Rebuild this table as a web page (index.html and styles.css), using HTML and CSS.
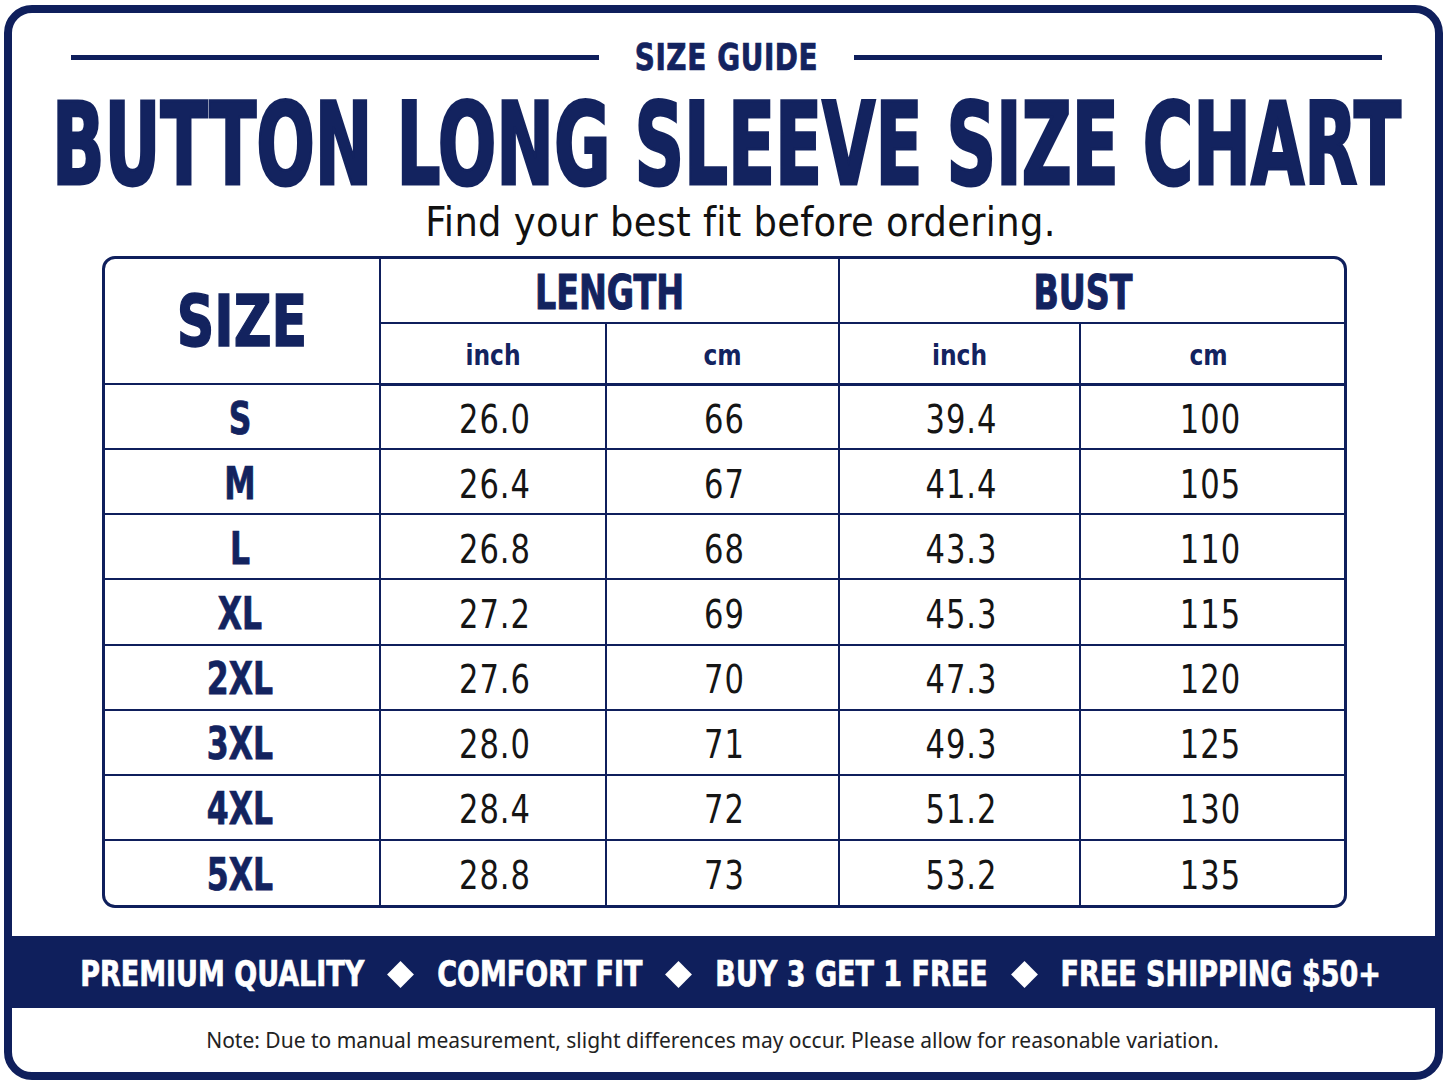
FILE: index.html
```html
<!DOCTYPE html>
<html lang="en">
<head>
<meta charset="utf-8">
<title>Button Long Sleeve Size Chart</title>
<link rel="stylesheet" href="styles.css">
</head>
<body>
<div class="frame">
  <div class="guide-row">
    <span class="rule"></span>
    <span class="guide sq">SIZE GUIDE</span>
    <span class="rule"></span>
  </div>
  <h1 class="title"><span class="sq">BUTTON LONG SLEEVE SIZE CHART</span></h1>
  <p class="subtitle"><span class="sq">Find your best fit before ordering.</span></p>
  <div class="chart">
    <table>
      <colgroup>
        <col class="c-size"><col class="c-li"><col class="c-lc"><col class="c-bi"><col class="c-bc">
      </colgroup>
      <thead>
        <tr class="group">
          <th rowspan="2" class="size-head"><span class="sq">SIZE</span></th>
          <th colspan="2"><span class="sq">LENGTH</span></th>
          <th colspan="2" class="bust"><span class="sq">BUST</span></th>
        </tr>
        <tr class="units">
          <th><span class="sq">inch</span></th><th><span class="sq">cm</span></th>
          <th><span class="sq">inch</span></th><th class="last"><span class="sq">cm</span></th>
        </tr>
      </thead>
      <tbody>
        <tr><th><span class="sq">S</span></th><td><span class="sq">26.0</span></td><td><span class="sq">66</span></td><td><span class="sq">39.4</span></td><td class="last"><span class="sq">100</span></td></tr>
        <tr><th><span class="sq">M</span></th><td><span class="sq">26.4</span></td><td><span class="sq">67</span></td><td><span class="sq">41.4</span></td><td class="last"><span class="sq">105</span></td></tr>
        <tr><th><span class="sq">L</span></th><td><span class="sq">26.8</span></td><td><span class="sq">68</span></td><td><span class="sq">43.3</span></td><td class="last"><span class="sq">110</span></td></tr>
        <tr><th><span class="sq">XL</span></th><td><span class="sq">27.2</span></td><td><span class="sq">69</span></td><td><span class="sq">45.3</span></td><td class="last"><span class="sq">115</span></td></tr>
        <tr><th><span class="sq">2XL</span></th><td><span class="sq">27.6</span></td><td><span class="sq">70</span></td><td><span class="sq">47.3</span></td><td class="last"><span class="sq">120</span></td></tr>
        <tr><th><span class="sq">3XL</span></th><td><span class="sq">28.0</span></td><td><span class="sq">71</span></td><td><span class="sq">49.3</span></td><td class="last"><span class="sq">125</span></td></tr>
        <tr><th><span class="sq">4XL</span></th><td><span class="sq">28.4</span></td><td><span class="sq">72</span></td><td><span class="sq">51.2</span></td><td class="last"><span class="sq">130</span></td></tr>
        <tr><th><span class="sq">5XL</span></th><td><span class="sq">28.8</span></td><td><span class="sq">73</span></td><td><span class="sq">53.2</span></td><td class="last"><span class="sq">135</span></td></tr>
      </tbody>
    </table>
  </div>
  <div class="band">
    <span class="deal sq">PREMIUM QUALITY</span>
    <span class="diamond"></span>
    <span class="deal sq">COMFORT FIT</span>
    <span class="diamond"></span>
    <span class="deal sq">BUY 3 GET 1 FREE</span>
    <span class="diamond"></span>
    <span class="deal sq">FREE SHIPPING $50+</span>
  </div>
  <div class="note">Note: Due to manual measurement, slight differences may occur. Please allow for reasonable variation.</div>
</div>
</body>
</html>
```

FILE: styles.css
```css
* { box-sizing: border-box; }

html, body {
  margin: 0;
  padding: 0;
  background: #ffffff;
}

body {
  width: 1448px;
  height: 1086px;
  overflow: hidden;
  font-family: "DejaVu Sans Condensed", "DejaVu Sans", sans-serif;
  font-stretch: condensed;
  color: #111111;
}

.sq {
  display: inline-block;
  transform-origin: 50% 50%;
}

.frame {
  margin: 5px 5px 0 4px;
  height: 1075px;
  border: 8px solid #0f1f5c;
  border-radius: 28px;
  display: flex;
  flex-direction: column;
  overflow: hidden;
}

/* ---------- header ---------- */
.guide-row {
  display: flex;
  align-items: center;
  gap: 36px;
  height: 44px;
  margin-top: 22px;
  padding: 0 53px 0 59px;
}

.rule {
  flex: 1;
  height: 5px;
  background: #0f1f5c;
}

.guide {
  font-size: 31px;
  font-weight: bold;
  letter-spacing: 0.6px;
  line-height: 44px;
  color: #13235f;
  -webkit-text-stroke: 0.6px #13235f;
  transform: scaleY(1.2);
}

.title {
  margin: 28px 0 0;
  height: 76px;
  text-align: center;
  font-size: 76.6px;
  line-height: 76px;
  font-weight: bold;
  color: #13235f;
  white-space: nowrap;
}

.title .sq {
  line-height: 68px;
  -webkit-text-stroke: 2px #13235f;
  transform: translateX(3px) scaleY(1.5);
}

.subtitle {
  margin: 18px 0 0;
  height: 42px;
  text-align: center;
  font-size: 41px;
  line-height: 42px;
  color: #111111;
  white-space: nowrap;
}

.subtitle .sq {
  line-height: 42px;
  letter-spacing: 0.3px;
  transform: translate(17px, 0);
}

/* ---------- chart ---------- */
.chart {
  margin: 13px 88px 0 90px;
  height: 652px;
  border: 3px solid #0f1f5c;
  border-radius: 13px;
  overflow: hidden;
}

.chart table {
  width: 100%;
  height: 100%;
  border-collapse: collapse;
  border-style: hidden;
  table-layout: fixed;
}

.c-size { width: 275px; }
.c-li { width: 226px; }
.c-lc { width: 233px; }
.c-bi { width: 241px; }
.c-bc { width: 264px; }

.chart th,
.chart td {
  border: 2px solid #0f1f5c;
  padding: 0;
  text-align: center;
  vertical-align: middle;
}

.chart th {
  color: #13235f;
  font-weight: bold;
}

.group { height: 64px; }
.group th {
  font-size: 37px;
}
.group th .sq {
  -webkit-text-stroke: 0.8px #13235f;
  transform: translateY(2px) scaleY(1.28);
}

.group th.bust { padding-right: 18px; }

.size-head { font-size: 58px !important; }
.size-head .sq {
  -webkit-text-stroke: 1.2px #13235f !important;
  transform: scaleY(1.23) !important;
}

.units { height: 61px; }
.units th {
  font-size: 26px;
  border-bottom-width: 3px;
}
.units th .sq { transform: translateY(2px) scaleY(1.1); }

.chart .last { padding-right: 8px; }

tbody tr { height: 65px; }

tbody th {
  font-size: 35px;
}
tbody th .sq {
  -webkit-text-stroke: 0.6px #13235f;
  transform: translate(-2px, 2px) scaleY(1.25);
}

tbody td {
  font-size: 34px;
  letter-spacing: 1px;
  color: #151515;
}
tbody td .sq { transform: translate(2px, 2px) scaleY(1.15); }

/* ---------- band ---------- */
.band {
  margin-top: 28px;
  height: 72px;
  background: #0f1f5c;
  display: flex;
  align-items: center;
  justify-content: center;
  gap: 27px;
  padding-left: 14px;
  padding-top: 4px;
}

.deal {
  font-size: 30px;
  font-weight: bold;
  color: #ffffff;
  line-height: 40px;
  -webkit-text-stroke: 0.6px #ffffff;
  transform: scaleY(1.2);
}

.diamond {
  width: 19px;
  height: 19px;
  background: #ffffff;
  transform: rotate(45deg);
  flex: none;
}

/* ---------- note ---------- */
.note {
  flex: 1;
  display: flex;
  align-items: center;
  justify-content: center;
  font-family: "Noto Sans", "DejaVu Sans", sans-serif;
  font-stretch: normal;
  font-size: 21px;
  color: #222222;
  padding: 2px 22px 2px 0;
}
```
